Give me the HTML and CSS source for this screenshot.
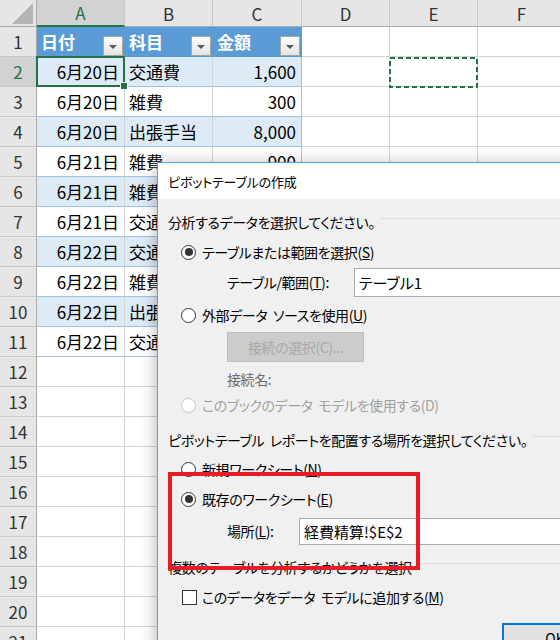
FILE: index.html
```html
<!DOCTYPE html>
<html lang="ja">
<head>
<meta charset="utf-8">
<title>ピボットテーブルの作成</title>
<link rel="stylesheet" href="styles.css">
</head>
<body>
<div class="sheet">
  <div class="row hdr">
    <div class="corner"><span class="tri"></span></div>
    <div class="ch sel">A</div>
    <div class="ch">B</div>
    <div class="ch">C</div>
    <div class="ch">D</div>
    <div class="ch">E</div>
    <div class="ch">F</div>
  </div>
  <div class="row">
    <div class="rh">1</div>
    <div class="th"><span>日付</span><span class="fb"></span></div>
    <div class="th"><span>科目</span><span class="fb"></span></div>
    <div class="th"><span>金額</span><span class="fb"></span></div>
    <div class="c"></div><div class="c"></div><div class="c"></div>
  </div>
  <div class="row">
    <div class="rh sel">2</div>
    <div class="t band num active">6月20日<span class="selbox"><span class="handle"></span></span></div>
    <div class="t band txt">交通費</div>
    <div class="t band num last">1,600</div>
    <div class="c"></div>
    <div class="c"><svg class="ants" width="89" height="31" viewBox="0 0 89 31"><rect x="1" y="1" width="87" height="29" fill="none" stroke="#217346" stroke-width="2" stroke-dasharray="5 3"/></svg></div>
    <div class="c"></div>
  </div>
  <div class="row">
    <div class="rh">3</div>
    <div class="t num">6月20日</div>
    <div class="t txt">雑費</div>
    <div class="t num last">300</div>
    <div class="c"></div><div class="c"></div><div class="c"></div>
  </div>
  <div class="row">
    <div class="rh">4</div>
    <div class="t band num">6月20日</div>
    <div class="t band txt">出張手当</div>
    <div class="t band num last">8,000</div>
    <div class="c"></div><div class="c"></div><div class="c"></div>
  </div>
  <div class="row">
    <div class="rh">5</div>
    <div class="t num">6月21日</div>
    <div class="t txt">雑費</div>
    <div class="t num last">900</div>
    <div class="c"></div><div class="c"></div><div class="c"></div>
  </div>
  <div class="row">
    <div class="rh">6</div>
    <div class="t band num">6月21日</div>
    <div class="t band txt">雑費</div>
    <div class="t band num last"></div>
    <div class="c"></div><div class="c"></div><div class="c"></div>
  </div>
  <div class="row">
    <div class="rh">7</div>
    <div class="t num">6月21日</div>
    <div class="t txt">交通費</div>
    <div class="t num last"></div>
    <div class="c"></div><div class="c"></div><div class="c"></div>
  </div>
  <div class="row">
    <div class="rh">8</div>
    <div class="t band num">6月22日</div>
    <div class="t band txt">交通費</div>
    <div class="t band num last"></div>
    <div class="c"></div><div class="c"></div><div class="c"></div>
  </div>
  <div class="row">
    <div class="rh">9</div>
    <div class="t num">6月22日</div>
    <div class="t txt">雑費</div>
    <div class="t num last"></div>
    <div class="c"></div><div class="c"></div><div class="c"></div>
  </div>
  <div class="row">
    <div class="rh">10</div>
    <div class="t band num">6月22日</div>
    <div class="t band txt">出張手当</div>
    <div class="t band num last"></div>
    <div class="c"></div><div class="c"></div><div class="c"></div>
  </div>
  <div class="row">
    <div class="rh">11</div>
    <div class="t num">6月22日</div>
    <div class="t txt">交通費</div>
    <div class="t num last"></div>
    <div class="c"></div><div class="c"></div><div class="c"></div>
  </div>
  <div class="row"><div class="rh">12</div><div class="c"></div><div class="c"></div><div class="c"></div><div class="c"></div><div class="c"></div><div class="c"></div></div>
  <div class="row"><div class="rh">13</div><div class="c"></div><div class="c"></div><div class="c"></div><div class="c"></div><div class="c"></div><div class="c"></div></div>
  <div class="row"><div class="rh">14</div><div class="c"></div><div class="c"></div><div class="c"></div><div class="c"></div><div class="c"></div><div class="c"></div></div>
  <div class="row"><div class="rh">15</div><div class="c"></div><div class="c"></div><div class="c"></div><div class="c"></div><div class="c"></div><div class="c"></div></div>
  <div class="row"><div class="rh">16</div><div class="c"></div><div class="c"></div><div class="c"></div><div class="c"></div><div class="c"></div><div class="c"></div></div>
  <div class="row"><div class="rh">17</div><div class="c"></div><div class="c"></div><div class="c"></div><div class="c"></div><div class="c"></div><div class="c"></div></div>
  <div class="row"><div class="rh">18</div><div class="c"></div><div class="c"></div><div class="c"></div><div class="c"></div><div class="c"></div><div class="c"></div></div>
  <div class="row"><div class="rh">19</div><div class="c"></div><div class="c"></div><div class="c"></div><div class="c"></div><div class="c"></div><div class="c"></div></div>
  <div class="row"><div class="rh">20</div><div class="c"></div><div class="c"></div><div class="c"></div><div class="c"></div><div class="c"></div><div class="c"></div></div>
  <div class="row"><div class="rh">21</div><div class="c"></div><div class="c"></div><div class="c"></div><div class="c"></div><div class="c"></div><div class="c"></div></div>
</div>

<div class="dlg">
  <div class="title">ピボットテーブルの作成</div>
  <div class="dbody">
    <div class="gh g1">分析するデータを選択してください。</div>
    <div class="opt o1"><span class="radio on"></span><span>テーブルまたは範囲を選択(<u>S</u>)</span></div>
    <div class="field f1"><span class="lbl lw1">テーブル/範囲(<u>T</u>):</span><span class="inp">テーブル1</span></div>
    <div class="opt o2"><span class="radio"></span><span>外部データ<span class="sp"> </span>ソースを使用(<u>U</u>)</span></div>
    <div class="field b1"><span class="btn-dis">接続の選択(C)...</span></div>
    <div class="field cn"><span class="muted">接続名:</span></div>
    <div class="opt o3 dis"><span class="radio"></span><span>このブックのデータ<span class="sp"> </span>モデルを使用する(D)</span></div>
    <div class="gh g2"><span>ピボットテーブル<span class="sp"> </span>レポートを配置する場所を選択してください。</span></div>
    <div class="opt o4"><span class="radio"></span><span>新規ワークシート(<u>N</u>)</span></div>
    <div class="opt o5"><span class="radio on"></span><span>既存のワークシート(<u>E</u>)</span></div>
    <div class="field f2"><span class="lbl lw2">場所(<u>L</u>):</span><span class="inp short">経費精算!$E$2</span></div>
    <div class="gh g3">複数のテーブルを分析するかどうかを選択</div>
    <div class="opt chkrow"><span class="chk"></span><span>このデータをデータ<span class="sp"> </span>モデルに追加する(<u>M</u>)</span></div>
    <div class="okrow"><span class="ok">OK</span></div>
  </div>
  <div class="mark"></div>
</div>
</body>
</html>
```

FILE: styles.css
```css
html, body {
  margin: 0;
  padding: 0;
  width: 560px;
  height: 640px;
  overflow: hidden;
  background: #ffffff;
}
body {
  position: relative;
  font-family: "Noto Sans CJK JP", "Noto Sans", sans-serif;
}

/* ---------- spreadsheet ---------- */
.sheet {
  width: 566px;
  font-size: 17px;
  color: #000;
}
.row {
  display: grid;
  grid-template-columns: 37px 88px 88px 89px 88px 88px 88px;
  height: 30px;
}
.row.hdr { height: 27px; }
.row > div {
  box-sizing: border-box;
  border-right: 1px solid #d4d4d4;
  border-bottom: 1px solid #d4d4d4;
  display: flex;
  align-items: center;
  position: relative;
  white-space: nowrap;
  line-height: 1;
}
.row > .corner {
  background: #e6e6e6;
  border-right-color: #ababab;
  border-bottom-color: #ababab;
  justify-content: flex-end;
  align-items: flex-end;
}
.tri {
  width: 21px;
  height: 21px;
  margin: 0 3px 2px 0;
  background: #b4b4b4;
  clip-path: polygon(100% 0, 100% 100%, 0 100%);
}
.row > .ch {
  background: #e6e6e6;
  justify-content: center;
  color: #333;
  border-right-color: #c8c8c8;
  border-bottom-color: #ababab;
}
.row > .ch.sel {
  background: #d2d2d2;
  color: #217346;
  border-bottom: 2px solid #217346;
}
.row > .rh {
  background: #e6e6e6;
  justify-content: center;
  color: #333;
  border-right-color: #ababab;
  border-bottom-color: #c8c8c8;
}
.row > .rh.sel {
  background: #d2d2d2;
  color: #217346;
}
.row > .th {
  background: #5b9bd5;
  color: #fff;
  font-weight: bold;
  padding-left: 4px;
  border-right-color: #5b9bd5;
  border-bottom-color: #5b9bd5;
}
.fb {
  box-sizing: border-box;
  width: 20px;
  height: 20px;
  margin: 0 1px 0 auto;
  align-self: flex-end;
  border: 1px solid #a6a6a6;
  background: linear-gradient(#ffffff, #e4e4e4);
  display: flex;
  align-items: center;
  justify-content: center;
}
.fb::after {
  content: "";
  margin-top: 2px;
  border-left: 4px solid transparent;
  border-right: 4px solid transparent;
  border-top: 4px solid #595959;
}
.row > .t {
  border-bottom-color: #9bc2e6;
}
.row > .band {
  background: #ddebf7;
}
.row > .num {
  justify-content: flex-end;
  padding-right: 5px;
}
.row > .txt {
  padding-left: 4px;
}
.row > .last {
  border-right-color: #9bc2e6;
}
.selbox {
  position: absolute;
  top: -1px;
  left: -1px;
  right: -1px;
  bottom: -1px;
  border: 2px solid #217346;
  z-index: 3;
}
.handle {
  position: absolute;
  right: -5px;
  bottom: -5px;
  width: 6px;
  height: 6px;
  background: #217346;
  border: 1px solid #ffffff;
}
.ants {
  position: absolute;
  left: -1px;
  top: 0;
  z-index: 3;
}

/* ---------- dialog ---------- */
.dlg {
  position: absolute;
  left: 157px;
  top: 162px;
  width: 430px;
  height: 520px;
  box-sizing: border-box;
  border: 1px solid #4ea6ea;
  background: #f0f0f0;
  box-shadow: 0 3px 16px rgba(0, 0, 0, 0.32);
  font-family: "Noto Sans CJK JP", "Noto Sans", sans-serif;
  font-feature-settings: "palt";
  font-size: 14px;
  letter-spacing: -0.4px;
  color: #000;
  z-index: 10;
}
.sp {
  padding-left: 3px;
}
.title {
  height: 36px;
  background: #ffffff;
  display: flex;
  align-items: center;
  padding-left: 10px;
  font-size: 13px;
  letter-spacing: -0.2px;
}
.dbody {
  display: flex;
  flex-direction: column;
  padding-left: 10px;
}
.gh {
  height: 26px;
  display: flex;
  align-items: center;
  white-space: nowrap;
}
.gh::after {
  content: "";
  flex: 1;
  height: 1px;
  background: #dcdcdc;
  margin: 0 0 7px 6px;
}
.opt {
  height: 26px;
  display: flex;
  align-items: center;
  gap: 6px;
  padding-left: 13px;
  white-space: nowrap;
}
.field {
  height: 30px;
  display: flex;
  align-items: center;
  padding-left: 59px;
  white-space: nowrap;
}
.lbl { flex: none; }
.lw1 { width: 127px; }
.lw2 { width: 72px; }
.inp {
  flex: 1;
  height: 29px;
  box-sizing: border-box;
  border: 1px solid #ababab;
  background: #ffffff;
  display: flex;
  align-items: center;
  padding-left: 4px;
  font-size: 15px;
  letter-spacing: 0;
}
.inp.short { height: 27px; }
.radio {
  flex: none;
  width: 15px;
  height: 15px;
  box-sizing: border-box;
  border: 1px solid #333333;
  border-radius: 50%;
  background: #ffffff;
  display: flex;
  align-items: center;
  justify-content: center;
}
.radio.on::after {
  content: "";
  width: 8px;
  height: 8px;
  border-radius: 50%;
  background: #333333;
}
.dis { color: #a0a0a0; }
.dis .radio { border-color: #c4c4c4; }
.muted { color: #6d6d6d; }
.btn-dis {
  flex: none;
  width: 137px;
  height: 30px;
  box-sizing: border-box;
  background: #cccccc;
  border: 1px solid #bfbfbf;
  color: #a8a8a8;
  display: flex;
  align-items: center;
  justify-content: center;
}
.chk {
  flex: none;
  width: 15px;
  height: 15px;
  box-sizing: border-box;
  border: 1px solid #333333;
  background: #ffffff;
}
.chkrow { padding-left: 14px; gap: 5px; }
.okrow {
  display: flex;
  padding-left: 334px;
  margin-top: 13px;
}
.ok {
  flex: none;
  width: 106px;
  height: 30px;
  box-sizing: border-box;
  border: 2px solid #0078d7;
  background: #e1e1e1;
  display: flex;
  align-items: center;
  justify-content: center;
  letter-spacing: 0;
}

/* vertical rhythm */
.g1 { margin-top: 10px; }
.o1 { margin-top: 4px; }
.f1 { margin-top: 2px; }
.o2 { margin-top: 5px; }
.b1 { margin-top: 4px; }
.cn { margin-top: 4px; height: 26px; }
.g2 { margin-top: 9px; }
.o4 { margin-top: 3px; }
.o5 { margin-top: 4px; }
.f2 { margin-top: 4px; }
.g3 { margin-top: 8px; }
.chkrow { margin-top: 4px; }

/* annotation */
.mark {
  position: absolute;
  left: 10px;
  top: 309px;
  width: 252px;
  height: 98px;
  box-sizing: border-box;
  border: 4px solid #e81c24;
  pointer-events: none;
}
```
